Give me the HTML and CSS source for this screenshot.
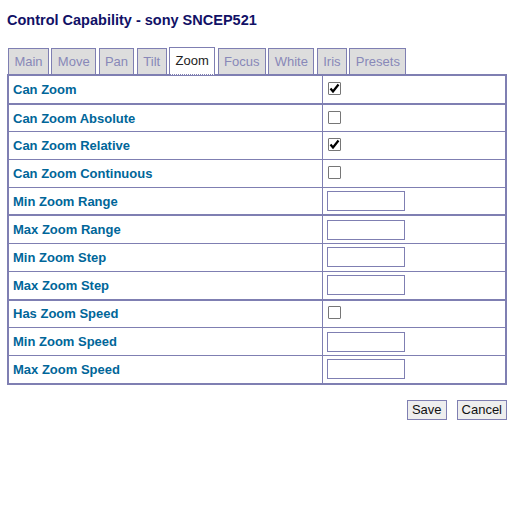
FILE: index.html
```html
<!DOCTYPE html>
<html lang="en">
<head>
<meta charset="UTF-8">
<title>Control Capability</title>
<link rel="stylesheet" href="styles.css">
</head>
<body>

<h2 class="page-title">Control Capability - sony SNCEP521</h2>

<ul class="tabs">
    <li>Main</li>
    <li>Move</li>
    <li>Pan</li>
    <li>Tilt</li>
    <li class="active">Zoom</li>
    <li>Focus</li>
    <li>White</li>
    <li>Iris</li>
    <li>Presets</li>
</ul>

<table class="content-table">
    <tbody>
        <tr>
            <th>Can Zoom</th>
            <td><input type="checkbox" checked></td>
        </tr>
        <tr class="sep">
            <th>Can Zoom Absolute</th>
            <td><input type="checkbox"></td>
        </tr>
        <tr>
            <th>Can Zoom Relative</th>
            <td><input type="checkbox" checked></td>
        </tr>
        <tr>
            <th>Can Zoom Continuous</th>
            <td><input type="checkbox"></td>
        </tr>
        <tr>
            <th>Min Zoom Range</th>
            <td><input type="text" class="small"></td>
        </tr>
        <tr class="sep">
            <th>Max Zoom Range</th>
            <td><input type="text" class="small"></td>
        </tr>
        <tr>
            <th>Min Zoom Step</th>
            <td><input type="text" class="small"></td>
        </tr>
        <tr>
            <th>Max Zoom Step</th>
            <td><input type="text" class="small"></td>
        </tr>
        <tr class="sep">
            <th>Has Zoom Speed</th>
            <td><input type="checkbox"></td>
        </tr>
        <tr>
            <th>Min Zoom Speed</th>
            <td><input type="text" class="small"></td>
        </tr>
        <tr>
            <th>Max Zoom Speed</th>
            <td><input type="text" class="small"></td>
        </tr>
    </tbody>
</table>

<div class="content-buttons">
    <button type="button">Save</button>
    <button type="button">Cancel</button>
</div>

</body>
</html>
```

FILE: styles.css
```css
/* base */
body {
    margin: 0;
    padding: 0 7px;
    font-family: "Liberation Sans", Arial, sans-serif;
    font-size: 13px;
    color: #333;
    background: #fff;
}

.page-title {
    font-size: 14.5px;
    font-weight: bold;
    color: #111166;
    margin: 0;
    padding: 12px 0 0;
    height: 35px;
}

/* tabs */
.tabs {
    list-style: none;
    margin: 0;
    padding: 0;
    display: flex;
    gap: 2.5px;
    height: 27px;
    align-items: flex-end;
}
.tabs li {
    height: 25px;
    line-height: 25px;
    padding: 0 5.4px;
    border: 1px solid #7f7fb2;
    border-bottom: none;
    background: #dddddd;
    color: #8888b8;
    font-size: 13px;
}
.tabs li:first-child {
    margin-left: 1px;
}
.tabs li.active {
    background: #fff;
    color: #222;
    height: 26px;
    margin-bottom: -1px;
    position: relative;
    border-bottom: 1px dotted #7f7fb2;
}

/* table */
.content-table {
    width: 500px;
    border-collapse: collapse;
    border: 2px solid #7f7fb2;
}
.content-table th,
.content-table td {
    border: 1px solid #7f7fb2;
    height: 26.7px;
    padding: 0 4px;
    text-align: left;
    vertical-align: middle;
}
.content-table th {
    width: 305px;
    color: #006699;
    font-size: 13px;
    font-weight: bold;
}
.content-table tr.sep th,
.content-table tr.sep td {
    border-top: 2px solid #7f7fb2;
}
.content-table input[type="checkbox"] {
    appearance: none;
    -webkit-appearance: none;
    display: block;
    margin: -2px 0 0 1px;
    width: 13px;
    height: 13px;
    border: 1px solid #767676;
    border-radius: 1px;
    background: #fff;
}
.content-table input[type="checkbox"]:checked {
    background: #fff url("data:image/svg+xml;utf8,<svg xmlns='http://www.w3.org/2000/svg' width='11' height='11' viewBox='0 0 11 11'><path d='M1.5 5.5 L4 8.5 L9.5 1.5' fill='none' stroke='black' stroke-width='2.2'/></svg>") no-repeat center;
}
.content-table input.small {
    width: 74px;
    height: 18px;
    padding: 0 1px;
    margin: 0;
    border: 1px solid #7f7fb2;
    display: block;
}

/* buttons */
.content-buttons {
    display: flex;
    justify-content: flex-end;
    gap: 10px;
    width: 500px;
    margin-top: 15px;
}
.content-buttons button {
    font-family: "Liberation Sans", Arial, sans-serif;
    font-size: 13px;
    color: #111;
    background: #eeeeee;
    border: 1px solid #7f7fb2;
    padding: 0 4px;
    height: 20px;
    line-height: 18px;
}
```
